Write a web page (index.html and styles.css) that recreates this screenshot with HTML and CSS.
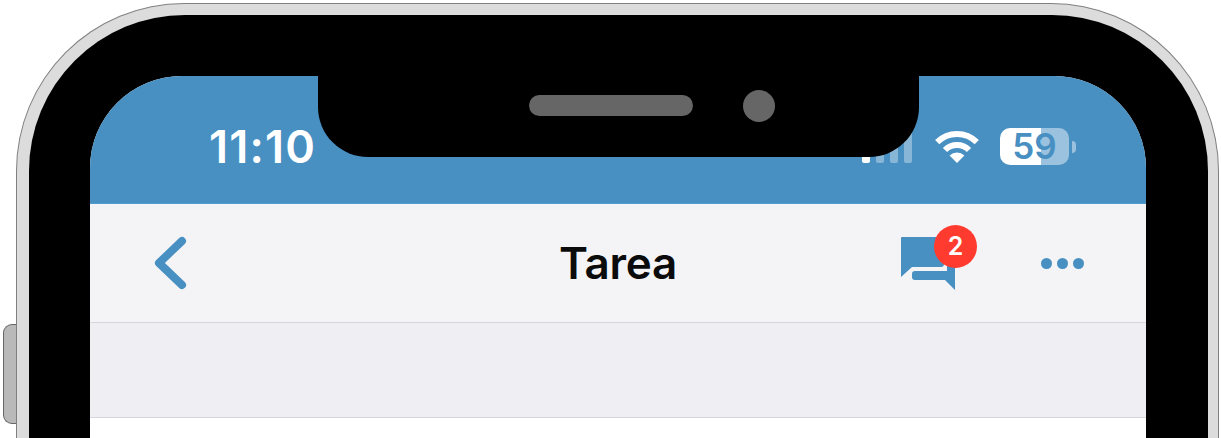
FILE: index.html
```html
<!DOCTYPE html>
<html lang="es">
<head>
    <meta charset="UTF-8">
    <title>Tarea</title>
    <link rel="stylesheet" href="styles.css">
</head>
<body>
    <div class="device">
        <div class="side-button"></div>
        <div class="frame">
            <div class="bezel">
                <div class="screen">
                    <div class="notch">
                        <div class="speaker"></div>
                        <div class="camera"></div>
                    </div>

                    <div class="status-bar">
                        <span class="time">11:10</span>
                        <div class="status-icons">
                            <div class="signal">
                                <span class="bar bar-1"></span>
                                <span class="bar bar-2"></span>
                                <span class="bar bar-3"></span>
                                <span class="bar bar-4"></span>
                            </div>
                            <svg class="wifi" width="46" height="33" viewBox="0 0 46 33">
                                <path d="M3.2 12.2A28 28 0 0 1 42.8 12.2" fill="none" stroke="#fff" stroke-width="6"/>
                                <path d="M11 20A17 17 0 0 1 35 20" fill="none" stroke="#fff" stroke-width="6"/>
                                <path d="M23 33L15.6 25.6A10.5 10.5 0 0 1 30.4 25.6Z" fill="#fff"/>
                            </svg>
                            <div class="battery">59</div>
                            <span class="battery-nub"></span>
                        </div>
                    </div>

                    <div class="nav-bar">
                        <svg class="back" width="34" height="56" viewBox="0 0 34 56">
                            <path d="M28 6L5 28L28 50" fill="none" stroke="#488fc2" stroke-width="8" stroke-linecap="round" stroke-linejoin="round"/>
                        </svg>
                        <span class="title">Tarea</span>
                        <div class="nav-actions">
                            <div class="chat">
                                <svg width="56" height="55" viewBox="0 0 56 55">
                                    <path d="M1 2Q1 1 2 1H44V28Q44 31 41 31H12L1 41Z" fill="#488fc2"/>
                                    <path d="M15 35H47V15H55V54L45 44H15Q12 44 12 41V38Q12 35 15 35Z" fill="#488fc2"/>
                                </svg>
                                <span class="badge">2</span>
                            </div>
                            <div class="more">
                                <span class="dot"></span>
                                <span class="dot"></span>
                                <span class="dot"></span>
                            </div>
                        </div>
                    </div>

                    <div class="band"></div>
                </div>
            </div>
        </div>
    </div>
</body>
</html>
```

FILE: styles.css
```css
html, body {
    margin: 0;
    height: 100%;
    background: #ffffff;
}

body {
    font-family: Inter, "Liberation Sans", sans-serif;
    padding: 3px 0 0 16px;
    box-sizing: border-box;
}

.device {
    position: relative;
    width: 1203px;
    height: 100%;
}

.side-button {
    position: absolute;
    left: -13px;
    top: 321px;
    width: 14px;
    height: 100px;
    box-sizing: border-box;
    background: #b9b9b9;
    border: 1px solid #666;
    border-right: none;
    border-radius: 9px 0 0 9px;
}

.frame {
    position: relative;
    background: #dcdcdc;
    border: 1px solid #808080;
    border-bottom: none;
    border-radius: 168px 168px 0 0;
    padding: 11px 10px 0 12px;
    height: 100%;
    box-sizing: border-box;
}

.bezel {
    background: #000;
    border-radius: 156px 156px 0 0;
    padding: 61px 62px 0 61px;
    height: 100%;
    box-sizing: border-box;
}

.screen {
    position: relative;
    background: #fff;
    border-radius: 92px 92px 0 0;
    overflow: hidden;
    height: 100%;
}

.notch {
    position: absolute;
    left: 228px;
    top: 0;
    width: 601px;
    height: 81px;
    background: #000;
    border-radius: 0 0 50px 50px;
    display: flex;
    align-items: center;
    gap: 50px;
    padding: 0 0 22px 211px;
    box-sizing: border-box;
}

.speaker {
    width: 164px;
    height: 21px;
    background: #666;
    border-radius: 11px;
}

.camera {
    width: 32px;
    height: 32px;
    background: #666;
    border-radius: 50%;
}

.status-bar {
    background: #488fc2;
    height: 128px;
    display: flex;
    align-items: flex-start;
    padding: 0 70px 0 119px;
    box-sizing: border-box;
    border-bottom: 1px solid #4f9ccf;
    color: #fff;
}

.time {
    font-size: 45px;
    font-weight: 600;
    line-height: 1;
    margin-top: 48px;
    letter-spacing: 1.2px;
}

.status-icons {
    margin-left: auto;
    display: flex;
    align-items: flex-start;
    margin-top: 52px;
}

.signal {
    display: flex;
    align-items: flex-end;
    gap: 6px;
    height: 35px;
    margin-right: 22px;
}

.bar {
    width: 8px;
    background: rgba(255, 255, 255, 0.35);
    border-radius: 2px;
}

.bar-1 { height: 12px; background: #fff; }
.bar-2 { height: 18px; }
.bar-3 { height: 26px; }
.bar-4 { height: 34px; }

.wifi {
    margin-right: 20px;
    margin-top: 2px;
}

.battery {
    width: 69px;
    height: 37px;
    border-radius: 10px;
    background: linear-gradient(to right, #fff 41px, rgba(255, 255, 255, 0.45) 41px);
    color: #488fc2;
    font-size: 35px;
    font-weight: 600;
    line-height: 37px;
    text-align: center;
}

.battery-nub {
    width: 4px;
    height: 12px;
    margin: 13px 0 0 3px;
    background: rgba(255, 255, 255, 0.45);
    border-radius: 0 6px 6px 0;
}

.nav-bar {
    background: #f4f4f7;
    height: 119px;
    border-bottom: 1px solid #d6d6da;
    box-sizing: border-box;
    display: grid;
    grid-template-columns: 1fr auto 1fr;
    align-items: center;
    padding: 0 62px 0 64px;
}

.back {
    display: block;
}

.title {
    font-size: 44px;
    font-weight: 600;
    color: #0b0b0b;
    letter-spacing: -0.3px;
    margin-left: -2px;
}

.nav-actions {
    display: flex;
    align-items: center;
    justify-content: flex-end;
    gap: 85px;
}

.chat {
    position: relative;
    height: 55px;
}

.chat svg {
    display: block;
}

.badge {
    position: absolute;
    left: 34px;
    top: -11px;
    width: 43px;
    height: 43px;
    border-radius: 50%;
    background: #ff3b30;
    color: #fff;
    font-size: 25px;
    font-weight: 600;
    line-height: 43px;
    text-align: center;
}

.more {
    display: flex;
    gap: 5px;
}

.dot {
    width: 11px;
    height: 11px;
    border-radius: 50%;
    background: #488fc2;
}

.band {
    background: #efeef3;
    height: 95px;
    border-bottom: 1px solid #d6d6da;
    box-sizing: border-box;
}
```
